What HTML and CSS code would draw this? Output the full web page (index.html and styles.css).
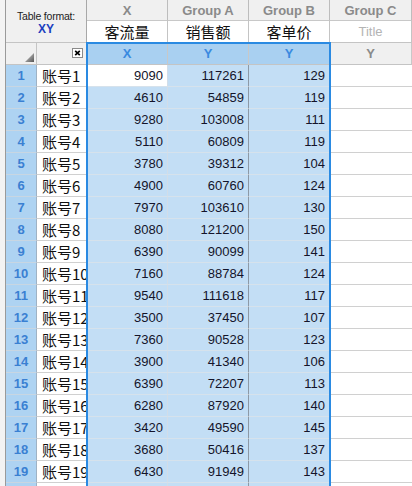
FILE: index.html
```html
<!DOCTYPE html>
<html>
<head>
<meta charset="utf-8">
<link rel="stylesheet" href="styles.css">
</head>
<body>
<div class="sheet">
  <div class="strip"></div>
  <div class="tf"><span class="tf-l">Table format:</span><span class="tf-v">XY</span></div>
  <div class="gh">X</div>
  <div class="gh">Group A</div>
  <div class="gh">Group B</div>
  <div class="gh gc">Group C</div>
  <div class="tt">客流量</div>
  <div class="tt">销售额</div>
  <div class="tt">客单价</div>
  <div class="tt ph">Title</div>
  <div class="cr"><div class="tri"></div></div>
  <div class="cx"><svg class="xbox" width="11" height="10" viewBox="0 0 11 10"><rect x="0.5" y="0.5" width="10" height="9" fill="#fff" stroke="#8a8a8a"/><path d="M3.2 2.8 L7.8 7.2 M7.8 2.8 L3.2 7.2" stroke="#000" stroke-width="1.7"/></svg></div>
  <div class="ch sel">X</div>
  <div class="ch sel">Y</div>
  <div class="ch sel">Y</div>
  <div class="ch gy">Y</div>

  <div class="rn">1</div><div class="nm">账号1</div><div class="v act">9090</div><div class="v sel a">117261</div><div class="v sel">129</div><div class="e"></div>
  <div class="rn">2</div><div class="nm">账号2</div><div class="v sel">4610</div><div class="v sel a">54859</div><div class="v sel">119</div><div class="e"></div>
  <div class="rn">3</div><div class="nm">账号3</div><div class="v sel">9280</div><div class="v sel a">103008</div><div class="v sel">111</div><div class="e"></div>
  <div class="rn">4</div><div class="nm">账号4</div><div class="v sel">5110</div><div class="v sel a">60809</div><div class="v sel">119</div><div class="e"></div>
  <div class="rn">5</div><div class="nm">账号5</div><div class="v sel">3780</div><div class="v sel a">39312</div><div class="v sel">104</div><div class="e"></div>
  <div class="rn">6</div><div class="nm">账号6</div><div class="v sel">4900</div><div class="v sel a">60760</div><div class="v sel">124</div><div class="e"></div>
  <div class="rn">7</div><div class="nm">账号7</div><div class="v sel">7970</div><div class="v sel a">103610</div><div class="v sel">130</div><div class="e"></div>
  <div class="rn">8</div><div class="nm">账号8</div><div class="v sel">8080</div><div class="v sel a">121200</div><div class="v sel">150</div><div class="e"></div>
  <div class="rn">9</div><div class="nm">账号9</div><div class="v sel">6390</div><div class="v sel a">90099</div><div class="v sel">141</div><div class="e"></div>
  <div class="rn">10</div><div class="nm">账号10</div><div class="v sel">7160</div><div class="v sel a">88784</div><div class="v sel">124</div><div class="e"></div>
  <div class="rn">11</div><div class="nm">账号11</div><div class="v sel">9540</div><div class="v sel a">111618</div><div class="v sel">117</div><div class="e"></div>
  <div class="rn">12</div><div class="nm">账号12</div><div class="v sel">3500</div><div class="v sel a">37450</div><div class="v sel">107</div><div class="e"></div>
  <div class="rn">13</div><div class="nm">账号13</div><div class="v sel">7360</div><div class="v sel a">90528</div><div class="v sel">123</div><div class="e"></div>
  <div class="rn">14</div><div class="nm">账号14</div><div class="v sel">3900</div><div class="v sel a">41340</div><div class="v sel">106</div><div class="e"></div>
  <div class="rn">15</div><div class="nm">账号15</div><div class="v sel">6390</div><div class="v sel a">72207</div><div class="v sel">113</div><div class="e"></div>
  <div class="rn">16</div><div class="nm">账号16</div><div class="v sel">6280</div><div class="v sel a">87920</div><div class="v sel">140</div><div class="e"></div>
  <div class="rn">17</div><div class="nm">账号17</div><div class="v sel">3420</div><div class="v sel a">49590</div><div class="v sel">145</div><div class="e"></div>
  <div class="rn">18</div><div class="nm">账号18</div><div class="v sel">3680</div><div class="v sel a">50416</div><div class="v sel">137</div><div class="e"></div>
  <div class="rn">19</div><div class="nm">账号19</div><div class="v sel">6430</div><div class="v sel a">91949</div><div class="v sel">143</div><div class="e"></div>
  <div class="rn"></div><div class="nm"></div><div class="v sel"></div><div class="v sel a"></div><div class="v sel"></div><div class="e"></div>

  <div class="selbox"></div>
</div>
</body>
</html>
```

FILE: styles.css
```css
html, body {
  margin: 0;
  padding: 0;
  width: 412px;
  height: 486px;
  overflow: hidden;
  background: #fff;
}

.sheet {
  position: relative;
  display: grid;
  grid-template-columns: 6px 31px 50px 81px 81px 81px 82px;
  grid-template-rows: 21px 22px 22px repeat(20, 22px);
  font-family: "Liberation Sans", Arial, "Noto Sans CJK SC", sans-serif;
  font-size: 13px;
  color: #111;
}

.sheet > div {
  box-sizing: border-box;
  overflow: hidden;
  white-space: nowrap;
}

.strip {
  grid-column: 1;
  grid-row: 1 / -1;
  background: #f3f3f3;
  border-right: 1px solid #9a9a9a;
}

.tf {
  grid-column: 2 / span 2;
  grid-row: span 2;
  background: #f0f0f0;
  border-right: 1px solid #a8a8a8;
  border-bottom: 1px solid #c4c4c4;
  display: flex;
  flex-direction: column;
  align-items: center;
  justify-content: center;
  gap: 1px;
  padding-top: 2px;
}
.tf-l {
  font-size: 10.5px;
  color: #222;
  letter-spacing: -0.2px;
  line-height: 12px;
}
.tf-v {
  font-size: 12px;
  font-weight: bold;
  color: #1c3fbf;
  line-height: 12px;
}

.gh {
  background: #f0f0f0;
  border-right: 1px solid #bdbdbd;
  border-bottom: 1px solid #c8c8c8;
  color: #8a8a8a;
  font-weight: bold;
  font-size: 13px;
  display: flex;
  align-items: center;
  justify-content: center;
}
.gh.gc { border-left: 0; }

.tt {
  background: #fff;
  border-right: 1px solid #c4c4c4;
  border-bottom: 1px solid #c4c4c4;
  font-family: "Noto Sans CJK SC", "Liberation Sans", sans-serif;
  font-size: 15px;
  color: #111;
  display: flex;
  align-items: center;
  justify-content: center;
  line-height: 20px;
}
.tt.ph {
  font-family: "Liberation Sans", Arial, sans-serif;
  font-size: 13px;
  color: #b4b4b4;
}

.cr {
  background: #f0f0f0;
  border-right: 1px solid #c4c4c4;
  border-bottom: 1px solid #c4c4c4;
  display: flex;
  justify-content: flex-end;
  align-items: flex-end;
  padding: 0 2px 2px 0;
}
.tri {
  width: 9px;
  height: 9px;
  clip-path: polygon(100% 0, 100% 100%, 0 100%);
  background: linear-gradient(135deg, #d8d8d8 0%, #8a8a8a 60%, #555 100%);
}

.cx {
  background: #f0f0f0;
  border-right: 1px solid #c4c4c4;
  border-bottom: 1px solid #c4c4c4;
  display: flex;
  justify-content: flex-end;
  align-items: flex-start;
  padding: 5px 3px 0 0;
}
.xbox { display: block; }

.ch {
  border-right: 1px solid #c8c8c8;
  border-bottom: 1px solid #c4c4c4;
  font-weight: bold;
  font-size: 13px;
  display: flex;
  align-items: center;
  justify-content: center;
}
.ch.sel {
  background: #a9d0f1;
  color: #3a8ae0;
}
.ch.gy {
  background: #f0f0f0;
  color: #8a8a8a;
}

.rn {
  background: #aed3f2;
  border-right: 1px solid #9fb2c4;
  border-bottom: 1px solid #c8d6e2;
  color: #3a80d2;
  font-weight: bold;
  font-size: 13px;
  display: flex;
  align-items: center;
  justify-content: center;
}

.nm {
  background: #fff;
  border-right: 1px solid #c4c4c4;
  border-bottom: 1px solid #d0d0d0;
  font-family: "Noto Sans CJK SC", "Liberation Sans", sans-serif;
  font-size: 15px;
  line-height: 21px;
  padding-left: 5px;
  color: #111;
}

.v {
  border-right: 1px solid #d2dde8;
  border-bottom: 1px solid #d6e2ec;
  text-align: right;
  padding-right: 4px;
  line-height: 21px;
  font-size: 13px;
  color: #14142a;
}
.v.sel { background: #c3def5; }
.v.act { background: #fff; }
.v.a { border-right-color: #8d99a6; }

.e {
  background: #fff;
  border-bottom: 1px solid #d0d0d0;
}

.selbox {
  position: absolute;
  left: 86px;
  top: 42px;
  width: 245px;
  height: 520px;
  box-sizing: border-box;
  border: 2px solid #2a8ae2;
  pointer-events: none;
}
```
